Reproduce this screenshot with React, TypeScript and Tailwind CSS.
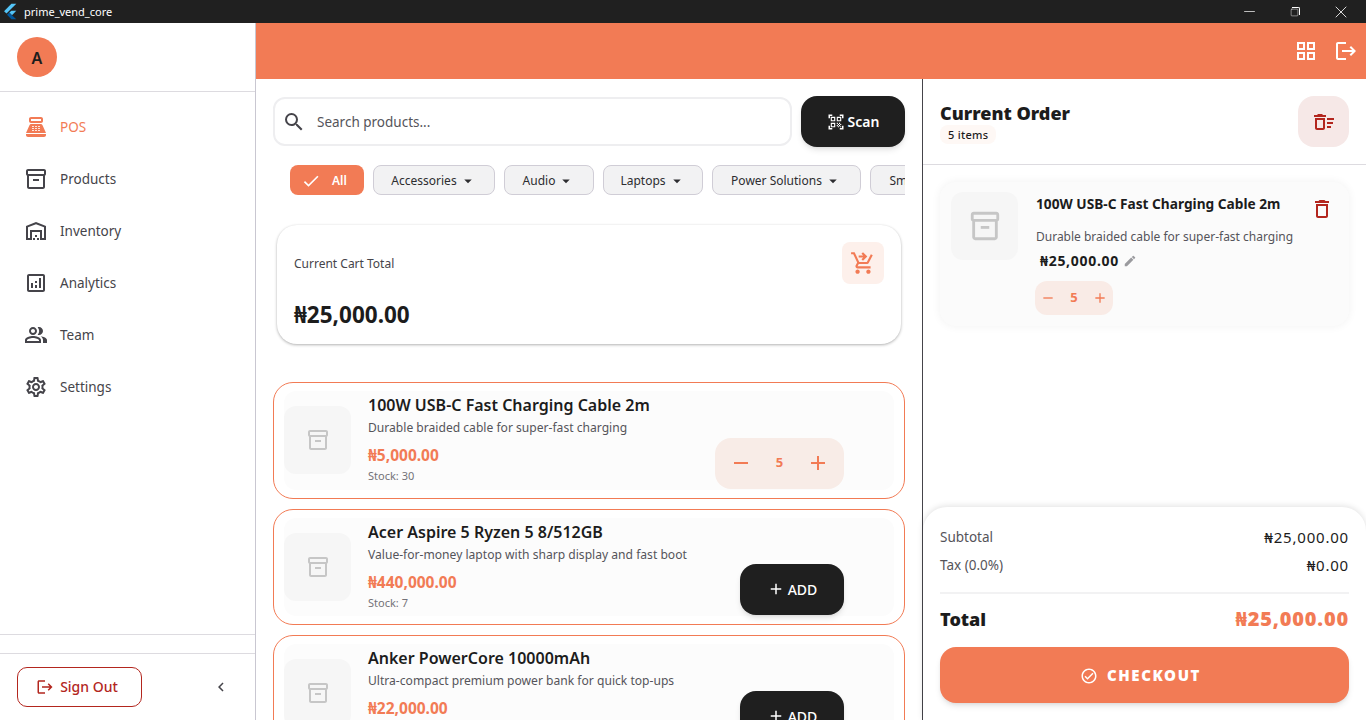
import type { ReactNode } from "react";
import { Minus, Square, X } from "lucide-react";
import {
  MdAdd,
  MdArrowDropDown,
  MdCheck,
  MdChevronLeft,
  MdEdit,
  MdLogout,
  MdOutlineAnalytics,
  MdOutlineCheckCircle,
  MdOutlineDelete,
  MdOutlineDeleteSweep,
  MdOutlineGridView,
  MdOutlineInventory2,
  MdOutlinePeopleAlt,
  MdOutlineSettings,
  MdOutlineShoppingCartCheckout,
  MdOutlineWarehouse,
  MdPointOfSale,
  MdQrCodeScanner,
  MdRemove,
  MdSearch,
} from "react-icons/md";

const NAV = [
  { label: "POS", icon: MdPointOfSale, active: true },
  { label: "Products", icon: MdOutlineInventory2 },
  { label: "Inventory", icon: MdOutlineWarehouse },
  { label: "Analytics", icon: MdOutlineAnalytics },
  { label: "Team", icon: MdOutlinePeopleAlt },
  { label: "Settings", icon: MdOutlineSettings },
];

const CHIPS = [
  { label: "Accessories", width: "w-[122px]" },
  { label: "Audio", width: "w-[90px]" },
  { label: "Laptops", width: "w-[100px]" },
  { label: "Power Solutions", width: "w-[149px]" },
  { label: "Smart Home", width: "w-[130px]" },
];

const PRODUCTS = [
  {
    name: "100W USB-C Fast Charging Cable 2m",
    description: "Durable braided cable for super-fast charging",
    price: "₦5,000.00",
    stock: 30,
    qty: 5,
  },
  {
    name: "Acer Aspire 5 Ryzen 5 8/512GB",
    description: "Value-for-money laptop with sharp display and fast boot",
    price: "₦440,000.00",
    stock: 7,
  },
  {
    name: "Anker PowerCore 10000mAh",
    description: "Ultra-compact premium power bank for quick top-ups",
    price: "₦22,000.00",
    stock: 18,
  },
];

function TitleBar() {
  return (
    <div className="flex h-[23px] shrink-0 items-center bg-[#202020] text-white">
      <svg viewBox="0 0 20 24" className="ml-[3px] h-[17px] w-[14px]">
        <path d="M12 1h7L5 15l-3.5-3.5z" fill="#54c5f8" />
        <path d="M12 11h7l-6.2 6.2L9 13.5z" fill="#54c5f8" />
        <path d="M9 13.5l3.8 3.7L19 23h-7l-6.3-6.2z" fill="#01579b" />
      </svg>
      <span className="ml-[7px] text-[11px] leading-none">prime_vend_core</span>
      <div className="mr-[2px] ml-auto flex items-center">
        <div className="flex w-[45px] justify-center">
          <Minus size={17} strokeWidth={1} />
        </div>
        <div className="flex w-[45px] justify-center">
          <div className="relative h-[10px] w-[10px]">
            <Square size={9} strokeWidth={1.2} className="absolute bottom-0 left-0" />
            <div className="absolute top-0 right-0 h-[8px] w-[8px] rounded-tr-[2px] border-t border-r border-white" />
          </div>
        </div>
        <div className="flex w-[47px] justify-center">
          <X size={20} strokeWidth={1} />
        </div>
      </div>
    </div>
  );
}

function Sidebar() {
  return (
    <aside className="flex w-[256px] shrink-0 flex-col border-r border-[#c9c7d1] bg-white">
      <div className="flex h-[69px] shrink-0 items-start border-b border-[#dddbe0] px-[17px] pt-[14px]">
        <div className="flex h-[40px] w-[40px] items-center justify-center rounded-full bg-[#f27b55] pt-[2px] text-base font-semibold text-[#1c1c1c]">
          A
        </div>
      </div>
      <nav className="flex flex-1 flex-col pt-[9px]">
        {NAV.map((item) => {
          const Icon = item.icon;
          return (
            <div
              key={item.label}
              className={`flex h-[52px] items-center gap-[12px] pl-[24px] text-[13.5px] ${
                item.active ? "text-[#f27b55]" : "text-[#45444a]"
              }`}
            >
              <Icon size={24} />
              <span>{item.label}</span>
            </div>
          );
        })}
      </nav>
      <div className="h-[20px] shrink-0 border-y border-[#dddbe0]" />
      <div className="flex h-[66px] shrink-0 items-start px-[17px] pt-[13px]">
        <button className="flex h-[40px] w-[125px] items-center justify-center gap-[6px] rounded-[10px] border border-[#b3261e] pr-[5px] text-sm font-medium text-[#b3261e]">
          <MdLogout size={18} />
          Sign Out
        </button>
        <MdChevronLeft size={18} className="mt-[11px] ml-[70px] text-[#45444a]" />
      </div>
    </aside>
  );
}

function ProductThumb({ iconSize }: { iconSize: number }) {
  return (
    <div className="flex h-[68px] w-[67px] shrink-0 items-center justify-center rounded-[12px] bg-[#f6f6f6] text-[#c6c6c6]">
      <MdOutlineInventory2 size={iconSize} />
    </div>
  );
}

function Chip({ children, width }: { children: ReactNode; width: string }) {
  return (
    <div
      className={`flex h-[30px] shrink-0 items-center justify-center gap-[2px] rounded-[8px] border-[1.5px] border-[#d0cdd6] bg-[#f2f2f3] pt-[1px] text-xs text-[#2d2d30] ${width}`}
    >
      {children}
      <MdArrowDropDown size={18} />
    </div>
  );
}

function ProductCard({ product }: { product: (typeof PRODUCTS)[number] }) {
  return (
    <div className="h-[116.5px] shrink-0 rounded-[20px] border border-[#f27b55] bg-white px-[10px] py-[8px]">
      <div className="flex h-full rounded-[12px] bg-[#fcfcfc]">
        <div className="self-center">
          <ProductThumb iconSize={24} />
        </div>
        <div className="ml-[17px] flex flex-col">
          <div className="mt-[2px] text-base leading-[24px] font-semibold text-[#1c1c1c]">{product.name}</div>
          <div className="mt-[2px] text-[12.1px] leading-[18px] text-[#55545a]">{product.description}</div>
          <div className="mt-[8px] text-[15.5px] leading-[20px] font-bold text-[#f27b55]">{product.price}</div>
          <div className="mt-[3px] text-[11px] leading-[16px] text-[#737278]">Stock: {product.stock}</div>
        </div>
        <div className="mr-[50px] ml-auto self-end">
          {product.qty ? (
            <div className="mb-[1px] flex h-[51px] w-[129px] items-center justify-between rounded-[16px] bg-[#f8ece7] px-[14px] text-[#f27b55]">
              <MdRemove size={24} />
              <span className="text-[13px] font-bold">{product.qty}</span>
              <MdAdd size={24} />
            </div>
          ) : (
            <button className="mb-[1px] flex h-[51px] w-[104px] items-center justify-center gap-[3px] rounded-[16px] bg-[#1f1f1f] pt-[1px] text-sm font-medium text-white shadow-md">
              <MdAdd size={18} className="mb-[2px]" />
              ADD
            </button>
          )}
        </div>
      </div>
    </div>
  );
}

function CatalogPanel() {
  return (
    <section className="flex w-[667px] shrink-0 flex-col overflow-hidden border-r border-[#45444a] bg-white pt-[17px] pr-[17px] pl-[17px]">
      <div className="flex h-[51px] shrink-0 items-center gap-[9px]">
        <div className="flex h-[49px] flex-1 items-center rounded-[12px] border-2 border-[#eeeef0] pl-[7px] text-[13.5px] text-[#55545a]">
          <MdSearch size={24} className="text-[#45444a]" />
          <span className="mt-[2px] ml-[11px]">Search products...</span>
        </div>
        <button className="flex h-[51px] w-[104px] items-center justify-center gap-[3px] rounded-[16px] bg-[#1f1f1f] text-sm font-semibold text-white shadow-md">
          <MdQrCodeScanner size={18} />
          Scan
        </button>
      </div>
      <div className="mt-[18px] flex h-[30px] shrink-0 gap-[9px] overflow-hidden pl-[17px]">
        <div className="flex h-[30px] w-[74px] shrink-0 items-center rounded-[8px] bg-[#f27b55] pt-[1px] pl-[11px] text-xs font-semibold text-white">
          <MdCheck size={20} />
          <span className="ml-[11px]">All</span>
        </div>
        {CHIPS.map((chip) => (
          <Chip key={chip.label} width={chip.width}>
            {chip.label}
          </Chip>
        ))}
      </div>
      <div className="mx-[4px] mt-[30px] flex h-[119px] shrink-0 justify-between rounded-[20px] bg-white p-[17px] shadow-[0_1px_3px_rgba(0,0,0,0.3),0_0_2px_rgba(0,0,0,0.03)]">
        <div>
          <div className="mt-[13px] text-xs leading-[18px] text-[#45444a]">Current Cart Total</div>
          <div className="mt-[26px] text-[22.5px] leading-[32px] font-bold text-[#1c1c1c]">₦25,000.00</div>
        </div>
        <div className="flex h-[42px] w-[42px] items-center justify-center rounded-[8px] bg-[#fdf0eb] text-[#f27b55]">
          <MdOutlineShoppingCartCheckout size={26} />
        </div>
      </div>
      <div className="mt-[38px] flex flex-col gap-[10px]">
        {PRODUCTS.map((product) => (
          <ProductCard key={product.name} product={product} />
        ))}
      </div>
    </section>
  );
}

function SummaryRow({ label, value }: { label: string; value: string }) {
  return (
    <div className="flex h-[28px] items-center justify-between">
      <span className="text-[13.5px] text-[#55545a]">{label}</span>
      <span className="text-[15px] tracking-[0.8px] text-[#1c1c1c]">{value}</span>
    </div>
  );
}

function OrderPanel() {
  return (
    <section className="flex min-w-0 flex-1 flex-col bg-white">
      <div className="flex h-[86px] shrink-0 items-center justify-between border-b border-[#dddbe0] px-[17px]">
        <div>
          <div className="mt-[1px] text-lg leading-[26px] font-black text-[#1c1c1c]">Current Order</div>
          <div className="mt-[-1px] w-fit rounded-[8px] bg-[#fef8f5] px-[8px] text-[11px] leading-[19px] font-medium tracking-wide text-[#1c1c1c]">
            5 items
          </div>
        </div>
        <div className="flex h-[51px] w-[51px] items-center justify-center rounded-[16px] bg-[#f6e8e7] text-[#b3261e]">
          <MdOutlineDeleteSweep size={24} />
        </div>
      </div>
      <div className="min-h-0 flex-1 px-[17px] pt-[17px]">
        <div className="flex h-[144px] rounded-[16px] bg-[#fbfbfb] py-[10px] pr-[16px] pl-[11px] shadow-[0_0_10px_rgba(0,0,0,0.06)]">
          <ProductThumb iconSize={34} />
          <div className="ml-[18px] min-w-0 flex-1">
            <div className="flex items-start justify-between">
              <div className="mt-[1px] text-[13.7px] leading-[22px] font-bold text-[#1c1c1c]">
                100W USB-C Fast Charging Cable 2m
              </div>
              <MdOutlineDelete size={24} className="mt-[5px] mr-[-1px] shrink-0 text-[#b3261e]" />
            </div>
            <div className="mt-[7px] text-xs leading-[18px] text-[#55545a]">
              Durable braided cable for super-fast charging
            </div>
            <div className="mt-[5px] flex items-center gap-[4px] pl-[4px] text-sm leading-[20px] font-bold tracking-[0.7px] text-[#1c1c1c]">
              ₦25,000.00
              <MdEdit size={14} className="text-[#9a9a9e]" />
            </div>
            <div className="mt-[10px] ml-[-1px] flex h-[34px] w-[78px] items-center justify-between rounded-[12px] bg-[#f9ebe6] px-[5px] text-[#f27b55]">
              <MdRemove size={16} />
              <span className="text-[13px] font-bold">5</span>
              <MdAdd size={16} />
            </div>
          </div>
        </div>
      </div>
      <div className="h-[213px] shrink-0 rounded-t-[24px] bg-white px-[17px] pt-[16px] shadow-[0_-1px_6px_rgba(0,0,0,0.12)]">
        <SummaryRow label="Subtotal" value="₦25,000.00" />
        <SummaryRow label="Tax (0.0%)" value="₦0.00" />
        <div className="mt-[13px] h-[2px] bg-[#f2f2f3]" />
        <div className="mt-[10px] flex h-[30px] items-center justify-between">
          <span className="text-lg font-black text-[#1c1c1c]">Total</span>
          <span className="text-xl font-black tracking-[0.8px] text-[#f27b55]">₦25,000.00</span>
        </div>
        <button className="mt-[13px] flex h-[56px] w-full items-center justify-center gap-[9px] rounded-[16px] bg-[#f27b55] pt-[1px] pr-[8px] text-[15px] font-black tracking-[1.6px] text-white shadow-md">
          <MdOutlineCheckCircle size={18} />
          CHECKOUT
        </button>
      </div>
    </section>
  );
}

export default function App() {
  return (
    <div className="flex h-screen w-screen flex-col overflow-hidden bg-white font-['Noto_Sans',sans-serif]">
      <TitleBar />
      <div className="flex min-h-0 flex-1">
        <Sidebar />
        <div className="flex min-w-0 flex-1 flex-col">
          <header className="flex h-[56px] shrink-0 items-center justify-end gap-[16px] bg-[#f27b55] pr-[8px] text-white">
            <MdOutlineGridView size={24} />
            <MdLogout size={24} />
          </header>
          <div className="flex min-h-0 flex-1">
            <CatalogPanel />
            <OrderPanel />
          </div>
        </div>
      </div>
    </div>
  );
}
